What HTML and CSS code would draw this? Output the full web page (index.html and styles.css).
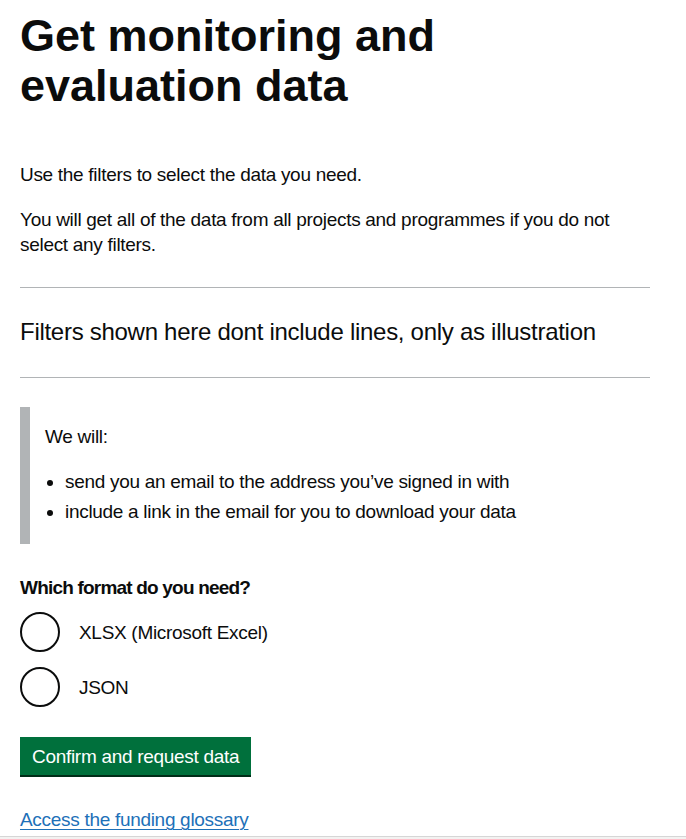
FILE: index.html
```html
<!DOCTYPE html>
<html lang="en">
<head>
<meta charset="utf-8">
<title>Get monitoring and evaluation data</title>
<link rel="stylesheet" href="styles.css">
</head>
<body>
<main class="page">
  <h1 class="title">Get monitoring and evaluation data</h1>
  <p class="body body-first">Use the filters to select the data you need.</p>
  <p class="body">You will get all of the data from all projects and programmes if you do not select any filters.</p>

  <div class="filters">
    <p class="filters-text">Filters shown here dont include lines, only as illustration</p>
  </div>

  <div class="inset">
    <p class="inset-intro">We will:</p>
    <ul class="bullets">
      <li>send you an email to the address you’ve signed in with</li>
      <li>include a link in the email for you to download your data</li>
    </ul>
  </div>

  <fieldset class="fieldset">
    <legend class="legend">Which format do you need?</legend>
    <div class="radios">
      <label class="radio">
        <input class="radio-input" type="radio" name="format" value="xlsx">
        <span class="radio-label">XLSX (Microsoft Excel)</span>
      </label>
      <label class="radio">
        <input class="radio-input" type="radio" name="format" value="json">
        <span class="radio-label">JSON</span>
      </label>
    </div>
  </fieldset>

  <button class="button" type="button">Confirm and request data</button>

  <p class="link-row"><a class="link" href="#">Access the funding glossary</a></p>
</main>
<footer class="footer"></footer>
</body>
</html>
```

FILE: styles.css
```css
html, body {
  margin: 0;
  padding: 0;
  background: #ffffff;
}

body {
  font-family: "Liberation Sans", Arial, sans-serif;
  color: #0b0c0c;
  font-size: 19px;
  line-height: 25px;
  letter-spacing: -0.3px;
}

.page {
  width: 630px;
  padding: 11px 0 0 20px;
}

.title {
  margin: 0 0 51px 0;
  font-size: 45px;
  line-height: 50px;
  font-weight: 700;
  letter-spacing: 0;
}

.body {
  margin: 0 0 20px 0;
}

.body:last-of-type {
  margin-bottom: 0;
}

.filters {
  margin-top: 30px;
  border-top: 1px solid #b1b4b6;
  border-bottom: 1px solid #b1b4b6;
  padding: 29px 0 30px 0;
}

.filters-text {
  margin: 0;
  font-size: 24px;
  line-height: 30px;
  letter-spacing: -0.28px;
}

.inset {
  margin-top: 29px;
  border-left: 10px solid #b1b4b6;
  padding: 17px 15px 20px 15px;
}

.inset-intro {
  margin: 0 0 20px 0;
}

.bullets {
  margin: 0;
  padding-left: 20px;
  list-style: disc;
}

.bullets li {
  margin-bottom: 5px;
}

.bullets li:last-child {
  margin-bottom: 0;
}

.fieldset {
  margin: 31px 0 0 0;
  padding: 0;
  border: 0;
  min-width: 0;
}

.legend {
  padding: 0;
  margin-bottom: 12px;
  font-weight: 700;
  letter-spacing: -0.8px;
  line-height: 25px;
}

.radios {
  display: flex;
  flex-direction: column;
  gap: 15px;
}

.radio {
  display: flex;
  align-items: center;
  gap: 19px;
  min-height: 40px;
  cursor: pointer;
}

.radio-input {
  appearance: none;
  -webkit-appearance: none;
  margin: 0;
  width: 40px;
  height: 40px;
  flex: 0 0 40px;
  border: 2px solid #0b0c0c;
  border-radius: 50%;
  background: #ffffff;
  box-sizing: border-box;
}

.radio-input:checked {
  background: radial-gradient(circle, #0b0c0c 0 10px, #ffffff 11px);
}

.button {
  display: block;
  margin-top: 30px;
  padding: 8px 10px 7px 10px;
  border: 2px solid transparent;
  background: #00703c;
  color: #ffffff;
  font-family: "Liberation Sans", Arial, sans-serif;
  font-size: 19px;
  line-height: 19px;
  letter-spacing: -0.3px;
  box-shadow: 0 2px 0 #002d18;
  border-radius: 0;
  cursor: pointer;
}

.link-row {
  margin: 32px 0 0 0;
}

.link {
  color: #1d70b8;
  text-decoration: underline;
  text-decoration-thickness: 1px;
  text-underline-offset: 3px;
}

.footer {
  margin-top: 4px;
  height: 40px;
  border-top: 1px solid #d6d6d6;
  background: #f3f2f1;
}
```
